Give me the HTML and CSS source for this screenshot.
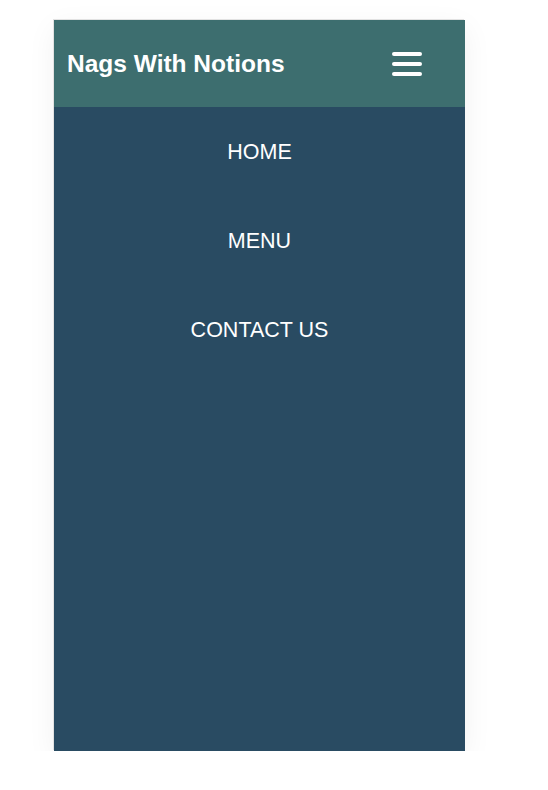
FILE: index.html
```html
<!DOCTYPE html>
<html lang="en">
<head>
<meta charset="utf-8">
<title>Nags With Notions</title>
<link rel="stylesheet" href="styles.css">
</head>
<body>
<div class="card">
  <header class="topbar">
    <h1 class="brand">Nags With Notions</h1>
    <button class="burger" aria-label="Menu">
      <svg width="30" height="24" viewBox="0 0 30 24" aria-hidden="true">
        <line x1="2" y1="2" x2="28" y2="2" />
        <line x1="2" y1="12" x2="28" y2="12" />
        <line x1="2" y1="22" x2="28" y2="22" />
      </svg>
    </button>
  </header>
  <nav class="nav">
    <a class="nav-item" href="#">HOME</a>
    <a class="nav-item" href="#">MENU</a>
    <a class="nav-item" href="#">CONTACT US</a>
  </nav>
</div>
</body>
</html>
```
FILE: styles.css
```css
html, body {
  margin: 0;
  padding: 0;
  background: #ffffff;
}

body {
  font-family: "Liberation Sans", Arial, sans-serif;
  padding: 20px 0 0 54px;
}

.card {
  width: 411px;
  height: 731px;
  display: flex;
  flex-direction: column;
  background: #294b62;
  box-shadow: -1px -1px 0 #e2e2e2, 0 8px 28px rgba(0, 0, 0, 0.06);
}

.topbar {
  height: 87px;
  display: flex;
  align-items: center;
  justify-content: space-between;
  padding: 0 43px 0 13px;
  background: #3d6e6f;
}

.brand {
  margin: 0;
  font-size: 24.5px;
  font-weight: bold;
  color: #ffffff;
  line-height: 28px;
}

.burger {
  display: flex;
  padding: 0;
  margin: 0;
  border: 0;
  background: none;
  cursor: pointer;
}

.burger svg line {
  stroke: #ffffff;
  stroke-width: 4;
  stroke-linecap: round;
}

.nav {
  display: flex;
  flex-direction: column;
  padding-top: 1px;
}

.nav-item {
  display: block;
  text-align: center;
  padding: 32px 0;
  line-height: 25px;
  font-size: 21.5px;
  color: #ffffff;
  text-decoration: none;
}
```
